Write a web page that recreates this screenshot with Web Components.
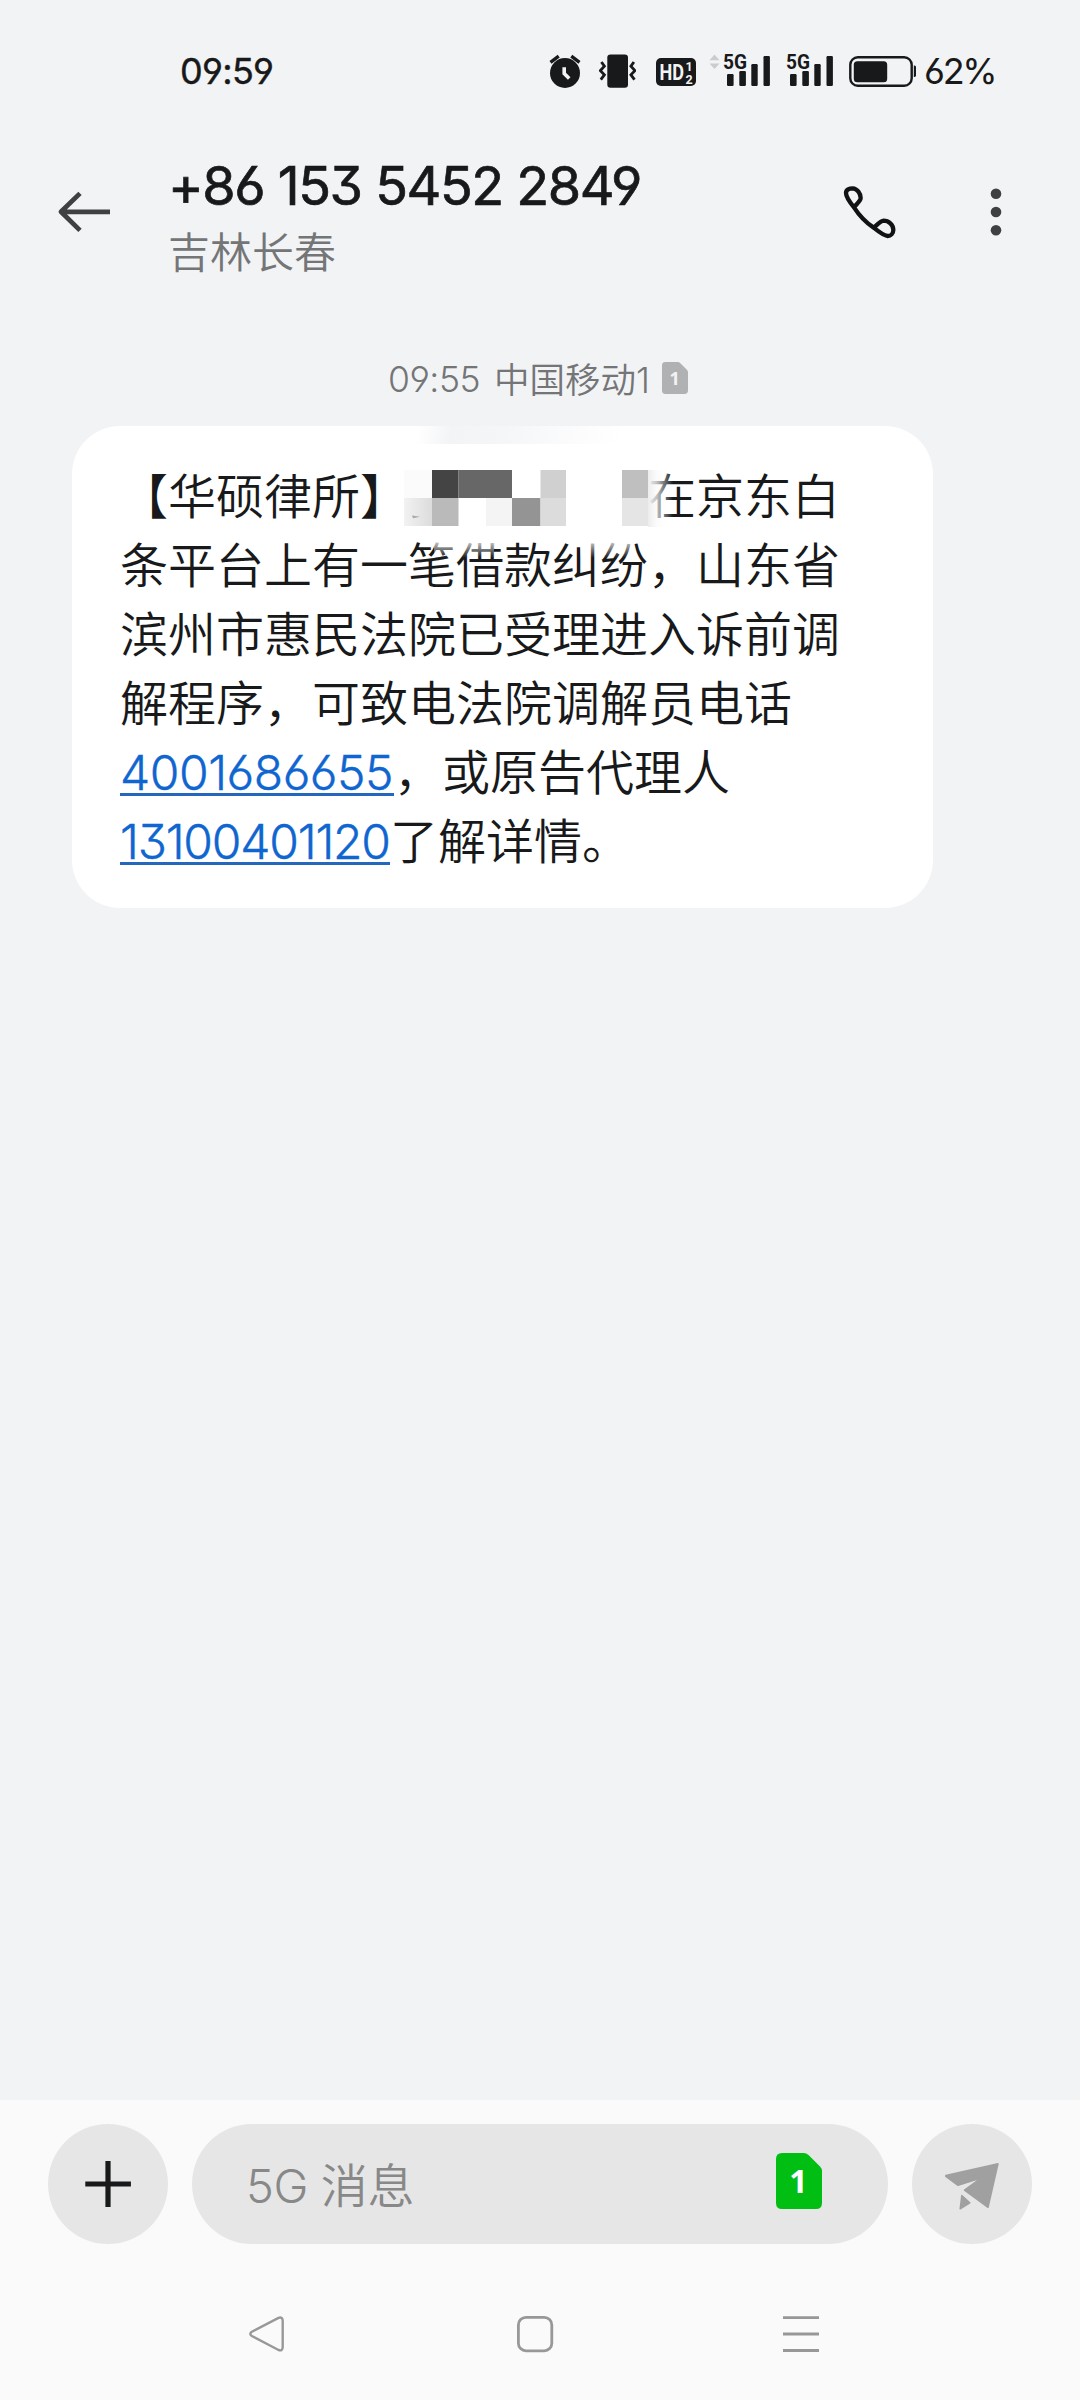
<!DOCTYPE html>
<html lang="zh-CN">
<head>
<meta charset="utf-8">
<title>+86 153 5452 2849</title>
<style>
    body {
        margin: 0;
        background: #f2f3f5;
        color: #18191a;
        font-family: Inter, "Noto Sans CJK SC", sans-serif;
        font-feature-settings: "cv03", "cv04", "cv09";
        text-spacing-trim: space-all;
    }
</style>
</head>
<body>
<sms-screen>
    <status-bar slot="top" time="09:59" battery="62"></status-bar>
    <chat-header slot="top" number="+86 153 5452 2849" place="吉林长春"></chat-header>
    <message-meta time="09:55" carrier="中国移动1"></message-meta>
    <message-bubble>【华硕律所】<mosaic-patch></mosaic-patch>在京东白<br>条平台上有一笔借款纠纷，山东省<br>滨州市惠民法院已受理进入诉前调<br>解程序，可致电法院调解员电话<br><phone-link style="--w:274px;--ls:-.45px">4001686655</phone-link>，或原告代理人<br><phone-link style="--w:270px;--ls:-1.2px">13100401120</phone-link>了解详情。</message-bubble>
    <compose-bar slot="bottom" hint="5G 消息"></compose-bar>
    <nav-bar slot="bottom"></nav-bar>
</sms-screen>

<script>
class SmsScreen extends HTMLElement {

    constructor() {
        super();
        this.attachShadow({mode: "open"}).innerHTML = `
        <style>
            :host {
                display: flex;
                flex-direction: column;
                width: 1080px;
                height: 2400px;
                overflow: hidden;
            }
            main {
                flex: 1;
                display: flex;
                flex-direction: column;
                align-items: flex-start;
            }
            footer {
                height: 300px;
                background: #fafafa;
            }
        </style>
        <header><slot name="top"></slot></header>
        <main><slot></slot></main>
        <footer><slot name="bottom"></slot></footer>`;
    }
}

class SignalIcon extends HTMLElement {

    constructor() {
        super();
        this.attachShadow({mode: "open"}).innerHTML = `
        <style>
            :host {
                display: block;
                height: 42px;
            }
            svg {
                display: block;
                overflow: visible;
            }
            text {
                font: 700 21px Roboto, sans-serif;
            }
        </style>
        <svg width="47" height="42" viewBox="0 0 47 42" fill="#18191a">
            <text x="-1" y="19" textLength="24" lengthAdjust="spacingAndGlyphs">5G</text>
            <rect x="3" y="24" width="6.6" height="12" rx="1.2"/>
            <rect x="15.3" y="21" width="6.6" height="15" rx="1.2"/>
            <rect x="27.3" y="14" width="6.4" height="22" rx="1.2"/>
            <rect x="39.5" y="6" width="6.4" height="30" rx="1.2"/>
        </svg>`;
    }
}

class StatusBar extends HTMLElement {

    connectedCallback() {
        this.attachShadow({mode: "open"}).innerHTML = `
        <style>
            :host {
                display: flex;
                align-items: center;
                height: 142px;
                padding-left: 180px;
                font-size: 36px;
                line-height: 42px;
                white-space: nowrap;
            }
            svg {
                display: block;
                flex: none;
            }
            .time {
                width: 369px;
                letter-spacing: -.7px;
                -webkit-text-stroke: .4px;
            }
            .vibrate { margin-left: 18px; }
            .hd { margin-left: 20px; }
            .arrows { margin-left: 13px; }
            .first { margin-left: 4px; }
            .second { margin-left: 16px; }
            .battery { margin-left: 15px; }
            .percent {
                margin-left: 7px;
                letter-spacing: -2.3px;
            }
            .hd text {
                fill: #f2f3f5;
                font: 700 22px Roboto, sans-serif;
            }
            .hd .small {
                font-size: 12.5px;
            }
        </style>
        <span class="time">${this.getAttribute("time")}</span>
        <svg width="32" height="42" viewBox="0 0 32 42">
            <circle cx="16" cy="23" r="15" fill="#18191a"/>
            <path d="M1.5 12.3L9.7 6.2M22.3 6.2l8.2 6.1" stroke="#18191a" stroke-width="3.4"/>
            <path d="M15.2 17.3v6.2l5 5" fill="none" stroke="#f2f3f5" stroke-width="3.6"/>
        </svg>
        <svg class="vibrate" width="37" height="42" viewBox="0 0 37 42">
            <rect x="8.3" y="4.4" width="20.7" height="33.4" rx="3.2" fill="#18191a"/>
            <path d="M2.4 12l3 4.2-4 4.4 4 4.3-3.6 4.8M34.9 12l-3 4.2 4 4.4-4 4.3 3.6 4.8" fill="none" stroke="#18191a" stroke-width="2.8"/>
        </svg>
        <svg class="hd" width="40" height="42" viewBox="0 0 40 42">
            <rect y="8" width="40" height="28" rx="5" fill="#18191a"/>
            <text x="3.5" y="30" textLength="24.5" lengthAdjust="spacingAndGlyphs">HD</text>
            <text class="small" x="29.5" y="20.5">1</text>
            <text class="small" x="29.5" y="33.5">2</text>
        </svg>
        <svg class="arrows" width="11" height="42" viewBox="0 0 11 42" fill="#cbccce">
            <path d="M5.5 4.5l5 5.7H.5zM5.5 19l5-5.5H.5z"/>
        </svg>
        <signal-icon class="first"></signal-icon>
        <signal-icon class="second"></signal-icon>
        <svg class="battery" width="68" height="42" viewBox="0 0 68 42">
            <rect x="1.3" y="7.3" width="61.4" height="28.4" rx="7.5" fill="none" stroke="#18191a" stroke-width="2.4"/>
            <rect x="4.8" y="11.2" width="33.4" height="21" rx="3.5" fill="#18191a"/>
            <path d="M64.8 15.5h.8q1.4 0 1.4 1.6v8.2q0 1.6-1.4 1.6h-.8z" fill="#18191a"/>
        </svg>
        <span class="percent">${this.getAttribute("battery")}%</span>`;
    }
}

class ChatHeader extends HTMLElement {

    connectedCallback() {
        this.attachShadow({mode: "open"}).innerHTML = `
        <style>
            :host {
                display: flex;
                align-items: center;
                height: 140px;
                padding-left: 57px;
                white-space: nowrap;
            }
            svg {
                display: block;
                flex: none;
            }
            .titles {
                width: 675px;
                margin: 13px 0 0 57px;
                line-height: 67px;
            }
            .number {
                font-size: 54px;
                letter-spacing: -1.5px;
                -webkit-text-stroke: .7px;
            }
            .place {
                font-size: 42px;
                font-weight: 350;
                color: #747577;
            }
            .more {
                margin-left: 93px;
            }
        </style>
        <svg width="54" height="44" viewBox="0 0 54 44" fill="none" stroke="#3f4042" stroke-width="4.8">
            <path d="M4 21.8h49M23 3.4L4 21.8l19 18.6" stroke-linejoin="round"/>
        </svg>
        <div class="titles">
            <div class="number">${this.getAttribute("number")}</div>
            <div class="place">${this.getAttribute("place")}</div>
        </div>
        <svg width="54" height="54" viewBox="130 105 162 162" fill="none" stroke="#111213" stroke-width="13" stroke-linejoin="round">
            <path d="M163 172C145 150 139 137 139 129C139 119 149 115 159 115C173 116 183 130 183 144C183 153 172 160 163 172C181 200 201 219 222 233C234 224 241 213 252 212C267 212 281 224 281 239C281 251 273 258 264 258C252 257 238 246 222 233"/>
        </svg>
        <svg class="more" width="12" height="50" viewBox="0 0 12 50" fill="#3f4042">
            <circle cx="6" cy="6.7" r="5.3"/>
            <circle cx="6" cy="25" r="5.3"/>
            <circle cx="6" cy="43.3" r="5.3"/>
        </svg>`;
    }
}

/* SIM card shape with the slot number, sized by --sim-w / --sim-h */
class SimBadge extends HTMLElement {

    constructor() {
        super();
        this.attachShadow({mode: "open"}).innerHTML = `
        <style>
            :host {
                display: block;
                flex: none;
                width: var(--sim-w, 46px);
                height: var(--sim-h, 56px);
            }
            svg {
                display: block;
                width: 100%;
                height: 100%;
            }
            text {
                font: 700 32px "Noto Sans", sans-serif;
                fill: var(--sim-text, #fff);
            }
        </style>
        <svg viewBox="0 0 46 56" preserveAspectRatio="none">
            <path d="M6 0H27.5Q30.5 0 32.5 2L44 13.5Q46 15.5 46 18V50Q46 56 40 56H6Q0 56 0 50V6Q0 0 6 0Z" fill="var(--sim-color, #00be12)"/>
            <text x="22.5" y="40" text-anchor="middle">1</text>
        </svg>`;
    }
}

class MessageMeta extends HTMLElement {

    connectedCallback() {
        this.attachShadow({mode: "open"}).innerHTML = `
        <style>
            :host {
                display: flex;
                align-items: center;
                height: 60px;
                margin: 68px 0 16px 388px;
                font-size: 35.5px;
                font-weight: 350;
                line-height: 60px;
                color: #747577;
                white-space: nowrap;
            }
            .time {
                width: 106px;
                letter-spacing: -.5px;
            }
            .carrier {
                width: 168px;
                padding-top: 1px;
            }
            sim-badge {
                --sim-w: 26px;
                --sim-h: 32px;
                --sim-color: #b0b1b3;
                --sim-text: #f2f3f5;
                margin-top: -4px;
            }
        </style>
        <span class="time">${this.getAttribute("time")}</span>
        <span class="carrier">${this.getAttribute("carrier")}</span>
        <sim-badge></sim-badge>`;
    }
}

class MessageBubble extends HTMLElement {

    constructor() {
        super();
        this.attachShadow({mode: "open"}).innerHTML = `
        <style>
            :host {
                display: block;
                box-sizing: border-box;
                position: relative;
                width: 861px;
                height: 482px;
                margin-left: 72px;
                padding: 36px 0 0 48px;
                border-radius: 48px;
                background: #fff;
                font-size: 48px;
                font-weight: 350;
                line-height: 69px;
                white-space: nowrap;
            }
            /* smudge left on the upper edge of the bubble */
            .smudge {
                position: absolute;
                left: 340px;
                top: 0;
                width: 220px;
                height: 18px;
                background: linear-gradient(100deg, rgba(242,243,245,0) 3%, #f3f4f6 18%, #f5f6f8 42%, rgba(246,247,249,.6) 65%, rgba(255,255,255,0) 95%);
            }
        </style>
        <div class="smudge"></div>
        <slot></slot>`;
    }
}

/* pixelated name, five characters wide */
class MosaicPatch extends HTMLElement {

    constructor() {
        super();
        this.attachShadow({mode: "open"}).innerHTML = `
        <style>
            :host {
                display: inline-block;
                position: relative;
                width: 240px;
                height: 56px;
                vertical-align: top;
            }
            svg {
                position: absolute;
                left: -8px;
                top: -1px;
            }
        </style>
        <svg width="296" height="110" viewBox="400 461 296 110">
            <defs>
                <linearGradient id="soft">
                    <stop offset="0" stop-color="#f2f2f2"/>
                    <stop offset="1" stop-color="#dcdcdc"/>
                </linearGradient>
                <linearGradient id="side">
                    <stop offset="0" stop-color="#ececec"/>
                    <stop offset=".35" stop-color="#fafafa" stop-opacity=".75"/>
                    <stop offset="1" stop-color="#fff" stop-opacity="0"/>
                </linearGradient>
                <linearGradient id="low" x2="0" y2="1">
                    <stop offset="0" stop-color="#fff" stop-opacity=".8"/>
                    <stop offset="1" stop-color="#fff" stop-opacity="0"/>
                </linearGradient>
            </defs>
            <rect x="404" y="470" width="28" height="28" fill="#fbfbfb"/>
            <rect x="404" y="498" width="28" height="28" fill="url(#soft)"/>
            <path d="M412 515.5l8 1.3-7 1.5z" fill="#a8a8a8"/>
            <rect x="432" y="470" width="26.5" height="28" fill="#444"/>
            <rect x="458.5" y="470" width="53.5" height="28" fill="#676767"/>
            <rect x="432" y="498" width="26.5" height="28" fill="#bababa"/>
            <rect x="486" y="498" width="26" height="28" fill="#f4f4f4"/>
            <rect x="512" y="498" width="28.5" height="28" fill="#949494"/>
            <rect x="540.5" y="470" width="25.5" height="28" fill="#d0d0d0"/>
            <rect x="540.5" y="498" width="25.5" height="28" fill="#dcdcdc"/>
            <rect x="622" y="470" width="26" height="28" fill="#bfbfbf"/>
            <rect x="622" y="498" width="26" height="28" fill="#e5e5e5"/>
            <rect x="648" y="470" width="25" height="57" fill="url(#side)"/>
            <rect x="434" y="541" width="60" height="17" fill="url(#low)"/>
            <rect x="580" y="541" width="52" height="17" fill="url(#low)"/>
        </svg>`;
    }
}

class PhoneLink extends HTMLElement {

    constructor() {
        super();
        this.attachShadow({mode: "open"}).innerHTML = `
        <style>
            :host {
                display: inline-block;
                width: var(--w);
                height: 69px;
                vertical-align: top;
                letter-spacing: var(--ls);
                color: #0f66d0;
                -webkit-text-stroke: .4px;
                background: linear-gradient(#2467bd, #2467bd) 0 55px / 100% 3px no-repeat;
            }
        </style>
        <slot></slot>`;
    }
}

class ComposeBar extends HTMLElement {

    connectedCallback() {
        this.attachShadow({mode: "open"}).innerHTML = `
        <style>
            :host {
                display: flex;
                gap: 24px;
                padding: 24px 48px 0;
            }
            svg {
                display: block;
            }
            .round {
                width: 120px;
                height: 120px;
                border-radius: 50%;
                background: #e6e6e6;
            }
            .field {
                flex: 1;
                display: flex;
                align-items: center;
                justify-content: space-between;
                padding: 0 66px 0 54px;
                border-radius: 60px;
                background: #e6e6e6;
                font-size: 47px;
                font-weight: 350;
                color: #888;
            }
            .field span {
                letter-spacing: -.4px;
                margin-top: -3px;
            }
            sim-badge {
                margin-top: -6px;
            }
        </style>
        <div class="round">
            <svg width="120" height="120" stroke="#18191a" stroke-width="5.2">
                <path d="M37.3 60h45.6M60 37v46"/>
            </svg>
        </div>
        <div class="field"><span>${this.getAttribute("hint")}</span><sim-badge></sim-badge></div>
        <div class="round">
            <svg width="120" height="120" fill="#a0a0a0" stroke="#a0a0a0" stroke-width="1.5" stroke-linejoin="round">
                <path d="M33.8 51.5L86 39.8 76 83.3 52.5 66.2 69 54 46 61.3 33.8 52.5z"/>
                <path d="M49.8 71.5l8 7.3-9.6 6z"/>
            </svg>
        </div>`;
    }
}

class NavBar extends HTMLElement {

    constructor() {
        super();
        this.attachShadow({mode: "open"}).innerHTML = `
        <style>
            :host {
                display: flex;
                gap: 227px;
                padding: 70px 0 0 247px;
            }
            svg {
                display: block;
                fill: none;
                stroke: #989898;
                stroke-width: 2.8;
            }
        </style>
        <svg width="40" height="40">
            <path d="M4.8 17.8L31.5 3.9Q35.7 2.5 35.7 7V33Q35.7 37.5 31.5 36L4.8 22Q1.8 19.9 4.8 17.8Z" stroke-width="2.4"/>
        </svg>
        <svg width="40" height="40" style="margin-left:1px">
            <rect x="3.4" y="3.4" width="33.4" height="33.4" rx="7.5"/>
        </svg>
        <svg width="40" height="40" style="margin-left:-1px">
            <path d="M2 3.6h36M2 20h36M2 36.5h36"/>
        </svg>`;
    }
}

customElements.define("sms-screen", SmsScreen);
customElements.define("signal-icon", SignalIcon);
customElements.define("status-bar", StatusBar);
customElements.define("chat-header", ChatHeader);
customElements.define("sim-badge", SimBadge);
customElements.define("message-meta", MessageMeta);
customElements.define("message-bubble", MessageBubble);
customElements.define("mosaic-patch", MosaicPatch);
customElements.define("phone-link", PhoneLink);
customElements.define("compose-bar", ComposeBar);
customElements.define("nav-bar", NavBar);
</script>
</body>
</html>
